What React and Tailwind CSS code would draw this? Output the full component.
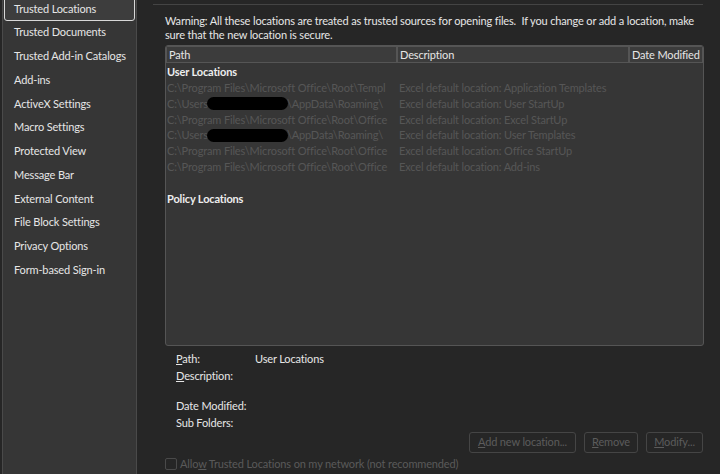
const sideItems = [
  "Trusted Locations",
  "Trusted Documents",
  "Trusted Add-in Catalogs",
  "Add-ins",
  "ActiveX Settings",
  "Macro Settings",
  "Protected View",
  "Message Bar",
  "External Content",
  "File Block Settings",
  "Privacy Options",
  "Form-based Sign-in",
];

const rows = [
  { path: "C:\\Program Files\\Microsoft Office\\Root\\Templ", desc: "Excel default location: Application Templates" },
  { path: "redact", desc: "Excel default location: User StartUp" },
  { path: "C:\\Program Files\\Microsoft Office\\Root\\Office", desc: "Excel default location: Excel StartUp" },
  { path: "redact", desc: "Excel default location: User Templates" },
  { path: "C:\\Program Files\\Microsoft Office\\Root\\Office", desc: "Excel default location: Office StartUp" },
  { path: "C:\\Program Files\\Microsoft Office\\Root\\Office", desc: "Excel default location: Add-ins" },
];

function Sidebar() {
  return (
    <div className="w-[135px] shrink-0 ml-[2px] h-full bg-[#363636] border-l border-r border-[#4a4a4a] overflow-hidden">
      <div className="mt-[-3px] flex flex-col">
        {sideItems.map((s, i) => (
          <div
            key={s}
            className={
              "h-[23.75px] flex items-center pl-[9px] mx-[1px] text-[#e6e6e6] whitespace-nowrap " +
              (i === 0 ? "border border-[#d8d8d8] rounded-[3px] bg-[#3d3d3d]" : "border border-transparent")
            }
          >
            {s}
          </div>
        ))}
      </div>
    </div>
  );
}

function Redacted() {
  return (
    <span className="inline-flex items-center">
      C:\Users
      <span className="inline-block w-[81px] h-[13px] rounded-full bg-black mx-[-1px]" />
      \AppData\Roaming\
    </span>
  );
}

function Table() {
  return (
    <div className="h-[301px] border border-[#555] rounded-[3px] bg-[#363636] overflow-hidden">
      <div className="flex h-[17px] leading-[15px]">
        <div className="w-[231px] shrink-0 border border-[#555] bg-[#3c3c3c] pl-[2px] text-[#e6e6e6]">Path</div>
        <div className="w-[232px] shrink-0 border border-[#555] bg-[#3c3c3c] pl-[2px] text-[#e6e6e6]">Description</div>
        <div className="flex-1 border border-[#555] bg-[#3c3c3c] pl-[2px] text-[#e6e6e6] whitespace-nowrap overflow-hidden">Date Modified</div>
      </div>
      <div className="pl-[1px] pt-[1px]">
        <div className="h-[16px] leading-[16px] font-bold text-[#eeeeee]">User Locations</div>
        {rows.map((r, i) => (
          <div key={i} className="flex h-[15.8px] leading-[16px] text-[#565656] whitespace-nowrap">
            <div className="w-[217px] shrink-0">{r.path === "redact" ? <Redacted /> : r.path}</div>
            <div className="pl-[15px]">{r.desc}</div>
          </div>
        ))}
        <div className="h-[16px] mt-[16px] leading-[16px] font-bold text-[#eeeeee]">Policy Locations</div>
      </div>
    </div>
  );
}

function Btn({ u, rest, w }) {
  return (
    <div className={"h-[21px] border border-[#454545] rounded-[3px] flex items-center justify-center text-[#5c5c5c] " + w}>
      <span>
        <span className="underline">{u}</span>
        {rest}
      </span>
    </div>
  );
}

export default function App() {
  return (
    <div
      className="w-[720px] h-[474px] bg-[#262626] flex overflow-hidden text-[11px] tracking-[-0.15px]"
      style={{ fontFamily: '"Segoe UI", Lato, "Noto Sans", sans-serif' }}
    >
      <Sidebar />
      <div className="flex-1 min-w-0 flex flex-col pl-[28px] pr-[16px]">
        <div className="h-[5px] border-b border-[#444] ml-[-12px] mr-[1px]" />
        <div className="mt-[9px] leading-[14px] text-[#e6e6e6] pr-[4px]">
          Warning: All these locations are treated as trusted sources for opening files.&nbsp; If you change or add a location, make sure that the new location is secure.
        </div>
        <div className="mt-[3px]">
          <Table />
        </div>
        <div className="pl-[11px] mt-[5px] text-[#e6e6e6] leading-[16.5px]">
          <div className="flex">
            <div className="w-[79px]"><span className="underline">P</span>ath:</div>
            <div>User Locations</div>
          </div>
          <div><span className="underline">D</span>escription:</div>
          <div className="h-[14px]" />
          <div>Date Modified:</div>
          <div>Sub Folders:</div>
        </div>
        <div className="flex justify-end gap-[8px] mt-[1px] mr-[1px]">
          <Btn u="A" rest="dd new location..." w="w-[107px]" />
          <Btn u="R" rest="emove" w="w-[54px]" />
          <Btn u="M" rest="odify..." w="w-[57px]" />
        </div>
        <div className="flex items-center mt-[3px] text-[#5a5a5a]">
          <div className="w-[12px] h-[12px] border border-[#4a4a4a] rounded-[2px] mr-[3px]" />
          <span>
            Allo<span className="underline">w</span> Trusted Locations on my network (not recommended)
          </span>
        </div>
      </div>
    </div>
  );
}
